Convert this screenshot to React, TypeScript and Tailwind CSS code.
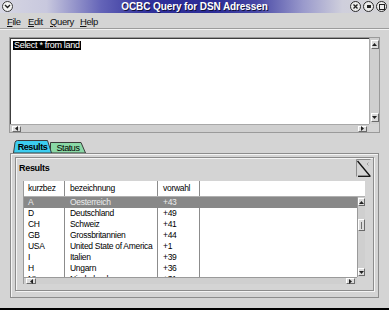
import React from 'react';

const rows = [
  ['A', 'Oesterreich', '+43'],
  ['D', 'Deutschland', '+49'],
  ['CH', 'Schweiz', '+41'],
  ['GB', 'Grossbritannien', '+44'],
  ['USA', 'United State of America', '+1'],
  ['I', 'Italien', '+39'],
  ['H', 'Ungarn', '+36'],
  ['NL', 'Niederlande', '+31'],
];

type Dir = 'up' | 'down' | 'left' | 'right';

const Tri = ({ dir }: { dir: Dir }) => {
  const pts: Record<Dir, string> = {
    up: '0,3 2.5,0 5,3',
    down: '0,0 2.5,3 5,0',
    left: '3,0 0,2.5 3,5',
    right: '0,0 3,2.5 0,5',
  };
  const vertical = dir === 'up' || dir === 'down';
  return (
    <svg width={vertical ? 5 : 3} height={vertical ? 3 : 5} viewBox={vertical ? '0 0 5 3' : '0 0 3 5'}>
      <polygon points={pts[dir]} fill="#202020" />
    </svg>
  );
};

const ArrowBox = ({ dir, className = '' }: { dir: Dir; className?: string }) => (
  <div
    className={`flex items-center justify-center bg-[#dcdcdc] border border-t-white border-l-white border-r-[#6a6a6a] border-b-[#6a6a6a] ${className}`}
  >
    <Tri dir={dir} />
  </div>
);

const WinBtn = ({ children }: { children: React.ReactNode }) => (
  <div className="w-[11px] h-[11px] rounded-full border-[1.5px] border-[#2a2a2a] bg-[#ececec] flex items-center justify-center">
    {children}
  </div>
);

export default function App() {
  return (
    <div className="w-[389px] h-[310px] bg-[#d4d4d4] flex flex-col overflow-hidden font-['Liberation_Sans',Arial,sans-serif] text-[10px] leading-none text-black border-b-2 border-black">
      {/* title bar */}
      <div className="h-[13px] grid grid-cols-[40px_1fr_40px] items-center bg-[linear-gradient(to_right,#d6d6e2_0%,#c8c8de_12%,#6464b8_26%,#30309a_38%,#2c2c96_55%,#4848a6_66%,#9a9acc_78%,#cfcfdc_88%,#d4d4d4_100%)]">
        <div className="pl-[2px]">
          <div className="w-[11px] h-[11px] rounded-full border border-[#3a3a3a] bg-[#f4f4f4] flex items-center justify-center">
            <svg width="7" height="5" viewBox="0 0 7 5">
              <polyline points="1,1 3.5,3.5 6,1" fill="none" stroke="#202020" strokeWidth="1.4" />
            </svg>
          </div>
        </div>
        <div className="text-center text-white font-bold text-[10px] tracking-[-0.1px] [text-shadow:1px_1px_0_#101040]">
          OCBC Query for DSN Adressen
        </div>
        <div className="flex justify-end gap-[2px] pr-[2px]">
          <WinBtn>
            <svg width="5" height="5" viewBox="0 0 5 5">
              <path d="M0.5,0.5 L4.5,4.5 M4.5,0.5 L0.5,4.5" stroke="#202020" strokeWidth="1.3" />
            </svg>
          </WinBtn>
          <WinBtn>
            <div className="w-[4px] h-[3px] bg-[#202020]" />
          </WinBtn>
          <WinBtn>
            <div className="w-[6px] h-[6px] border-[1.5px] border-[#202020]" />
          </WinBtn>
        </div>
      </div>

      {/* menu bar */}
      <div className="h-[15px] flex items-center pl-[7px] pt-[2px] text-[9.5px] tracking-[-0.4px] text-[#111]">
        <span className="w-[21px]"><span className="underline">F</span>ile</span>
        <span className="w-[22px]"><span className="underline">E</span>dit</span>
        <span className="w-[30px]"><span className="underline">Q</span>uery</span>
        <span><span className="underline">H</span>elp</span>
      </div>
      <div className="border-t border-[#9c9c9c] border-b border-b-[#f2f2f2]" />

      {/* sql editor */}
      <div className="mx-[9px] mt-[7px] h-[96px] border border-[#9a9a9a] flex flex-col">
        <div className="flex flex-1 min-h-0">
          <div className="flex-1 bg-white border-t border-l border-[#3c3c3c] pl-[2px] pt-[2px] text-[9px] tracking-[-0.3px]">
            <span className="bg-black text-white px-[1px] leading-[9px] inline-block">Select * from land</span>
          </div>
          <div className="w-[10px] flex flex-col justify-between items-center bg-[#cfcfcf] border-l border-[#a8a8a8] py-[2px]">
            <ArrowBox dir="up" className="w-[8px] h-[9px]" />
            <ArrowBox dir="down" className="w-[8px] h-[9px]" />
          </div>
        </div>
        <div className="h-[8px] flex">
          <div className="flex-1 flex justify-between items-center bg-[#cfcfcf] border-t border-[#a8a8a8] px-[2px]">
            <ArrowBox dir="left" className="w-[9px] h-[6px]" />
            <ArrowBox dir="right" className="w-[9px] h-[6px]" />
          </div>
          <div className="w-[10px]" />
        </div>
      </div>

      {/* tabs */}
      <div className="mt-[7px] ml-[13px] h-[13px] flex">
        <div className="relative z-10 w-[39px] h-[13px] flex items-center justify-center font-bold text-[9px] tracking-[-0.4px] pt-[1px]">
          <svg className="absolute inset-0" width="39" height="13" viewBox="0 0 39 13">
            <path d="M0.5,13 L2,2.5 Q2.5,0.5 4.5,0.5 L34.5,0.5 L38.5,13 Z" fill="#3ccdf0" stroke="#3a3a3a" strokeWidth="1" />
          </svg>
          <span className="relative">Results</span>
        </div>
        <div className="relative -ml-[2px] w-[36px] h-[13px] flex items-center justify-center text-[9px] tracking-[-0.4px] pt-[3px]">
          <svg className="absolute inset-0" width="36" height="13" viewBox="0 0 36 13">
            <path d="M0.5,13 L0.5,2.5 L31,2.5 L35.5,13 Z" fill="#8ad8a6" stroke="#3a3a3a" strokeWidth="1" />
          </svg>
          <span className="relative">Status</span>
        </div>
      </div>

      {/* tab panel */}
      <div className="mx-[10px] h-[145px] border border-[#8c8c8c] shadow-[inset_1px_1px_0_#f4f4f4] pt-[3px] pb-[6px] px-[4px] flex flex-col">
        <div className="flex-1 min-h-0 border border-[#8c8c8c] shadow-[inset_1px_1px_0_#f4f4f4,1px_1px_0_#f4f4f4] flex flex-col pb-[6px]">
          <div className="h-[23px] shrink-0 flex items-start justify-between pl-[3px] pr-[2px]">
            <span className="font-bold text-[9px] tracking-[-0.3px] mt-[6px]">Results</span>
            <svg className="mt-[1px]" width="15" height="18" viewBox="0 0 15 18">
              <path d="M0.5,17.5 L0.5,0.5 L14.5,0.5" fill="none" stroke="#8c8c8c" strokeWidth="1" />
              <path d="M1.5,2 L14,17" stroke="#101010" strokeWidth="1.3" />
              <path d="M2,17.3 L14.5,17.3" stroke="#101010" strokeWidth="1.3" />
              <path d="M11,5 L12.5,3.5 M11,5 L12.5,6.5" stroke="#909090" strokeWidth="0.8" />
            </svg>
          </div>

          {/* table */}
          <div className="ml-[7px] mr-[8px] flex-1 min-h-0 flex flex-col border-l border-[#9a9a9a]">
            <div className="h-[16px] shrink-0 bg-white flex items-center text-[8.5px] tracking-[-0.3px] border-b border-[#b0b0b0]">
              <div className="w-[41px] h-full flex items-center pl-[4px] border-r border-[#8c8c8c]">kurzbez</div>
              <div className="w-[93px] h-full flex items-center pl-[5px] border-r border-[#8c8c8c]">bezeichnung</div>
              <div className="w-[42px] h-full flex items-center pl-[5px] border-r border-[#8c8c8c]">vorwahl</div>
              <div className="flex-1" />
            </div>
            <div className="flex flex-1 min-h-0">
              <div className="flex-1 bg-white overflow-hidden text-[8.5px] tracking-[-0.3px]">
                {rows.map((r, i) => (
                  <div
                    key={r[0]}
                    className={`h-[11px] flex items-center ${i === 0 ? 'bg-[#888888] text-[#ececec]' : ''}`}
                  >
                    <div className={`w-[41px] h-full flex items-center pl-[4px] ${i === 0 ? '' : 'border-r border-[#8c8c8c]'}`}>{r[0]}</div>
                    <div className={`w-[93px] h-full flex items-center pl-[5px] whitespace-nowrap ${i === 0 ? '' : 'border-r border-[#8c8c8c]'}`}>{r[1]}</div>
                    <div className={`w-[42px] h-full flex items-center pl-[5px] ${i === 0 ? '' : 'border-r border-[#8c8c8c]'}`}>{r[2]}</div>
                    <div className="flex-1" />
                  </div>
                ))}
              </div>
              <div className="w-[8px] flex flex-col items-center bg-[#cfcfcf] border-l border-[#9a9a9a] py-[1px]">
                <ArrowBox dir="up" className="w-[7px] h-[8px]" />
                <div className="mt-[13px] w-[7px] h-[12px] bg-[#dcdcdc] border border-t-white border-l-white border-r-[#6a6a6a] border-b-[#6a6a6a] flex items-center justify-center">
                  <div className="w-[1px] h-[7px] bg-[#707070]" />
                </div>
                <div className="flex-1" />
                <ArrowBox dir="down" className="w-[7px] h-[8px]" />
              </div>
            </div>
            <div className="h-[7px] shrink-0 flex">
              <div className="flex-1 flex justify-between items-center bg-[#cfcfcf] border-t border-[#9a9a9a] px-[2px]">
                <ArrowBox dir="left" className="w-[10px] h-[6px]" />
                <ArrowBox dir="right" className="w-[9px] h-[6px]" />
              </div>
              <div className="w-[8px]" />
            </div>
          </div>
        </div>
      </div>
    </div>
  );
}
